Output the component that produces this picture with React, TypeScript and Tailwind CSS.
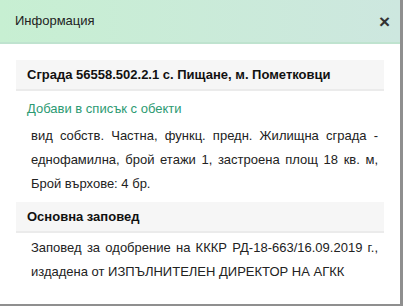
import React from 'react';

const SectionTitle = ({ children }: { children: React.ReactNode }) => (
    <div className="bg-[#f6f6f6] border-b-2 border-[#ebebeb] px-[11px] py-[6px] text-[13px] font-bold leading-[17px] text-[#111]">
        {children}
    </div>
);

const App = () => {
    return (
        <div className="h-[306px] w-[403px] overflow-hidden bg-[#8f8f8f]" style={{ fontFamily: '"Liberation Sans", Arial, sans-serif' }}>
            <div className="flex h-[304px] w-[400px] flex-col bg-white">
                {/* header */}
                <div className="flex h-[44px] items-center justify-between border-b-2 border-[#bfe3cf] bg-gradient-to-r from-[#c7efd2] to-[#cde7df] pl-[15px] pr-[10px]">
                    <span className="text-[13px] text-[#222]">Информация</span>
                    <span className="text-[19px] font-bold leading-none text-[#333]">×</span>
                </div>

                <div className="px-[16px] pt-[16px]">
                    <SectionTitle>Сграда 56558.502.2.1 с. Пищане, м. Пометковци</SectionTitle>

                    <div className="pl-[11px] pr-[6px] pt-[6px]">
                        <a className="block text-[13px] leading-[24px] text-[#2c9a72]">Добави в списък с обекти</a>
                        <p className="pl-[4px] pt-[3px] text-justify text-[13px] leading-[24px] text-[#222]">
                            вид собств. Частна, функц. предн. Жилищна сграда - еднофамилна, брой етажи 1, застроена площ 18 кв. м, Брой върхове: 4 бр.
                        </p>
                    </div>

                    <div className="pt-[6px]">
                        <SectionTitle>Основна заповед</SectionTitle>
                    </div>

                    <p className="pl-[15px] pr-[6px] pt-[3px] text-justify text-[13px] leading-[24px] text-[#222]">
                        Заповед за одобрение на КККР РД-18-663/16.09.2019 г., издадена от ИЗПЪЛНИТЕЛЕН ДИРЕКТОР НА АГКК
                    </p>
                </div>
            </div>
        </div>
    );
};

export default App;
